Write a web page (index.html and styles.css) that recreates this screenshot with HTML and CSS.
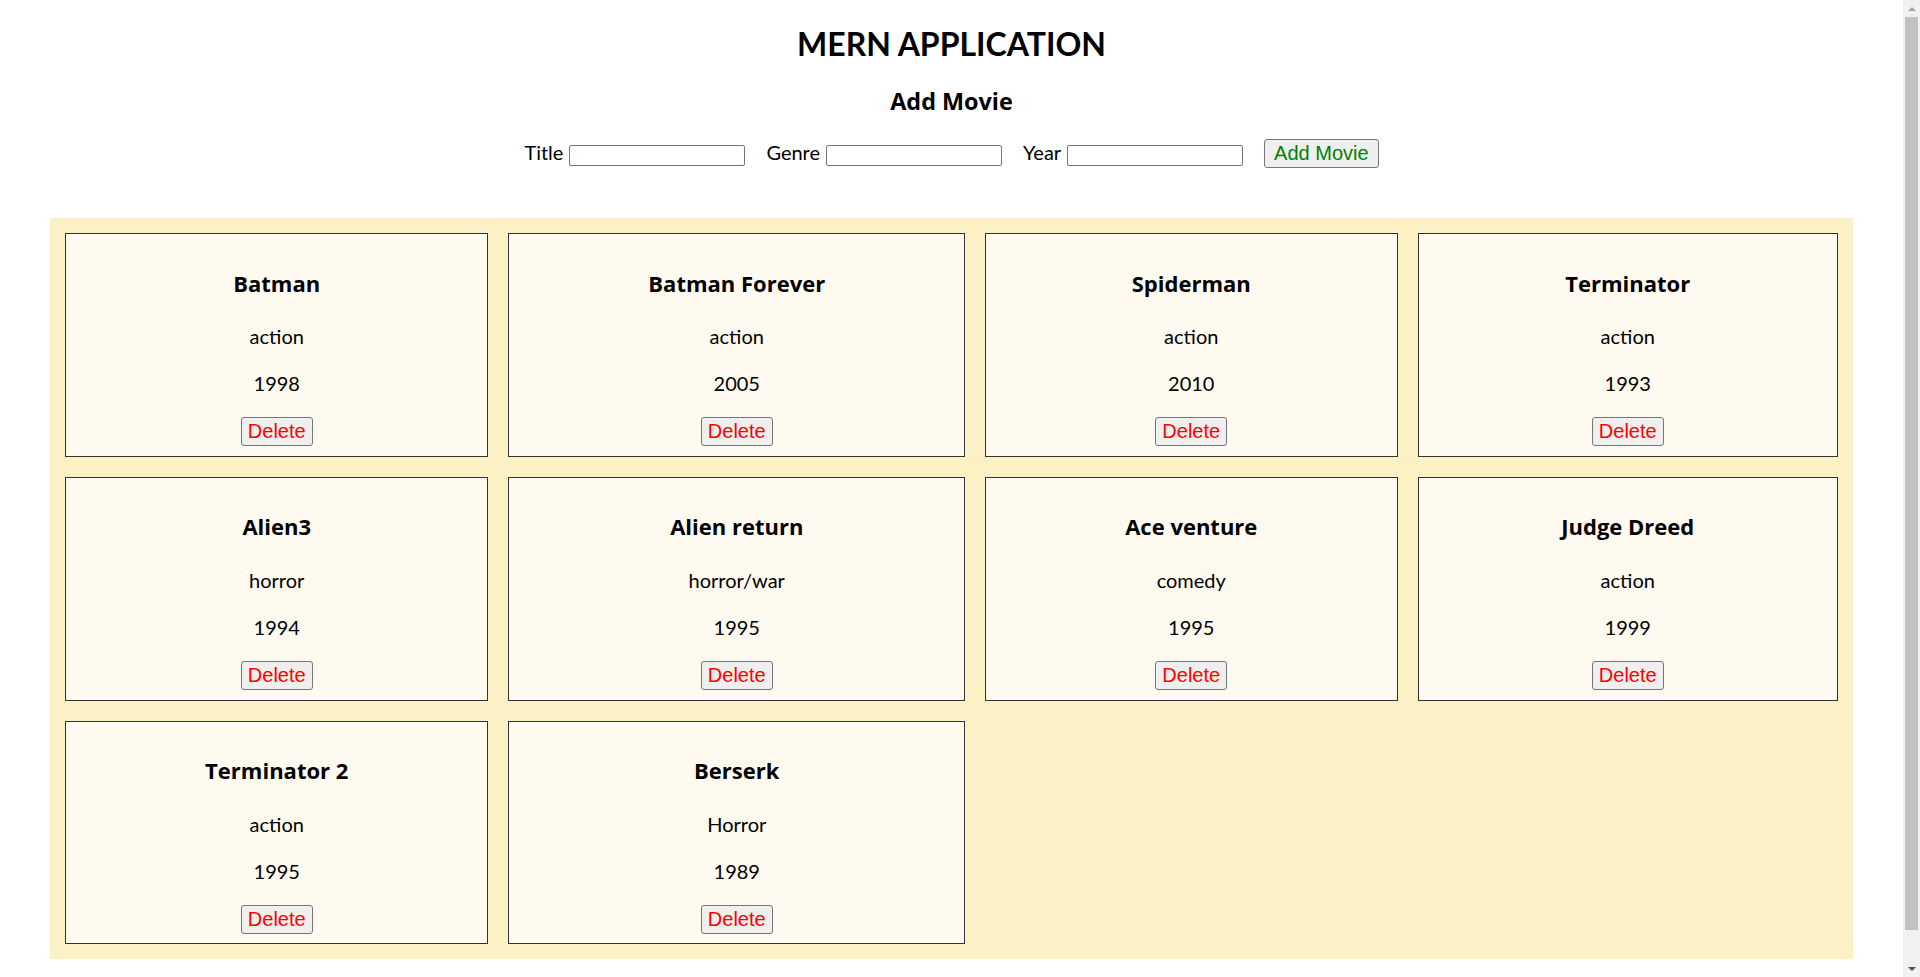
FILE: index.html
```html
<!DOCTYPE html>
<html lang="en">
<head>
<meta charset="utf-8">
<title>MERN APPLICATION</title>
<link rel="stylesheet" href="styles.css">
</head>
<body>
<div class="app">
  <h1 class="app-title">MERN APPLICATION</h1>
  <h3 class="form-title">Add Movie</h3>
  <form class="add-form">
    <label class="field">Title <input class="field-input" type="text"></label>
    <label class="field">Genre <input class="field-input" type="text"></label>
    <label class="field">Year <input class="field-input" type="text"></label>
    <button type="button" class="btn btn-add">Add Movie</button>
  </form>
  <div class="movie-grid">
    <div class="card"><h3 class="card-title">Batman</h3><p class="card-text">action</p><p class="card-text">1998</p><button type="button" class="btn btn-delete">Delete</button></div>
    <div class="card"><h3 class="card-title">Batman Forever</h3><p class="card-text">action</p><p class="card-text">2005</p><button type="button" class="btn btn-delete">Delete</button></div>
    <div class="card"><h3 class="card-title">Spiderman</h3><p class="card-text">action</p><p class="card-text">2010</p><button type="button" class="btn btn-delete">Delete</button></div>
    <div class="card"><h3 class="card-title">Terminator</h3><p class="card-text">action</p><p class="card-text">1993</p><button type="button" class="btn btn-delete">Delete</button></div>
    <div class="card"><h3 class="card-title">Alien3</h3><p class="card-text">horror</p><p class="card-text">1994</p><button type="button" class="btn btn-delete">Delete</button></div>
    <div class="card"><h3 class="card-title">Alien return</h3><p class="card-text">horror/war</p><p class="card-text">1995</p><button type="button" class="btn btn-delete">Delete</button></div>
    <div class="card"><h3 class="card-title">Ace venture</h3><p class="card-text">comedy</p><p class="card-text">1995</p><button type="button" class="btn btn-delete">Delete</button></div>
    <div class="card"><h3 class="card-title">Judge Dreed</h3><p class="card-text">action</p><p class="card-text">1999</p><button type="button" class="btn btn-delete">Delete</button></div>
    <div class="card"><h3 class="card-title">Terminator 2</h3><p class="card-text">action</p><p class="card-text">1995</p><button type="button" class="btn btn-delete">Delete</button></div>
    <div class="card"><h3 class="card-title">Berserk</h3><p class="card-text">Horror</p><p class="card-text">1989</p><button type="button" class="btn btn-delete">Delete</button></div>
  </div>
</div>
<div class="scrollbar" aria-hidden="true">
  <span class="sb-arrow sb-up"></span>
  <span class="sb-thumb"></span>
  <span class="sb-arrow sb-down"></span>
</div>
</body>
</html>
```

FILE: styles.css
```css
body {
  margin: 0;
  padding-right: 17px;
  font-family: "Segoe UI", Lato, "Open Sans", sans-serif;
  font-size: 20px;
  line-height: 1.33;
  color: #000;
  background: #fff;
}

.app {
  text-align: center;
  padding-bottom: 51px;
}

.app-title {
  margin: 23px 0 20.5px;
  font-size: 32px;
  line-height: 42.6px;
  font-weight: 700;
}

.form-title {
  margin: 0 0 22px;
  font-family: "Segoe UI", "Open Sans", sans-serif;
  font-size: 23.4px;
  line-height: 31.1px;
  font-weight: 700;
}

.add-form {
  display: flex;
  justify-content: center;
  align-items: baseline;
  gap: 21px;
  margin: 0;
}

.field {
  display: flex;
  align-items: baseline;
  gap: 6px;
}

.field-input {
  box-sizing: border-box;
  width: 176px;
  height: 21px;
  padding: 0 2px;
  border: 1px solid #767676;
  border-radius: 2px;
  background: #fff;
  font-family: "Liberation Sans", Arial, sans-serif;
  font-size: 16.67px;
}

.btn {
  font-family: "Liberation Sans", Arial, sans-serif;
  font-size: 20px;
  line-height: normal;
  padding: 2px 6px;
  border: 1px solid #767676;
  border-radius: 3px;
  background: #efefef;
  cursor: pointer;
}

.btn-add {
  color: #008000;
  padding: 2px 9px;
}

.btn-delete {
  color: #ff0000;
}

.movie-grid {
  display: grid;
  grid-template-columns: minmax(0, 423fr) minmax(0, 456fr) minmax(0, 412fr) minmax(0, 420fr);
  gap: 20px;
  margin: 50px 50px 0;
  padding: 15px;
  background: #fbf1c4;
}

.card {
  padding: 10px 10px 9.5px;
  border: 1px solid #333;
  background: #fffaf0;
  text-align: center;
}

.card-title {
  margin: 23.4px 0 24.5px;
  font-family: "Segoe UI", "Open Sans", sans-serif;
  font-size: 22px;
  line-height: 31.1px;
  font-weight: 700;
}

.card-text {
  margin: 0 0 20.5px;
  line-height: 26.6px;
}

/* window scrollbar (browser chrome in the reference) */
.scrollbar {
  position: fixed;
  top: 0;
  right: 0;
  width: 17px;
  height: 100vh;
  display: flex;
  flex-direction: column;
  background: #f1f1f1;
}

.sb-arrow {
  flex: none;
  height: 17px;
  display: flex;
  align-items: center;
  justify-content: center;
}

.sb-arrow::before {
  content: "";
  width: 0;
  height: 0;
  border-left: 4px solid transparent;
  border-right: 4px solid transparent;
}

.sb-up::before {
  border-bottom: 4px solid #a3a3a3;
}

.sb-down::before {
  border-top: 4px solid #505050;
}

.sb-thumb {
  flex: none;
  height: 913px;
  margin: 0 2px auto;
  background: #c1c1c1;
}
```
